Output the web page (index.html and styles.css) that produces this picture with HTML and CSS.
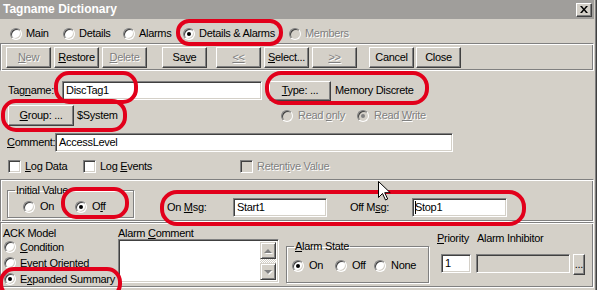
FILE: index.html
```html
<!DOCTYPE html>
<html lang="en">
<head>
  <meta charset="UTF-8" />
  <title>Tagname Dictionary</title>
  <link rel="stylesheet" href="styles.css">
</head>
<body>

<div class="window">
  <div class="titlebar">
    <span class="title">Tagname Dictionary</span>
    <span class="close-btn">
      <svg width="8" height="7" viewBox="0 0 8 7"><path d="M0 0h2l2 2.4 2-2.4h2l-3 3.5 3 3.5h-2l-2-2.4-2 2.4h-2l3-3.5z"/></svg>
    </span>
  </div>

  <div class="tabs">
    <div class="opt"><span class="radio"></span><span>Main</span></div>
    <div class="opt"><span class="radio"></span><span>Details</span></div>
    <div class="opt"><span class="radio"></span><span>Alarms</span></div>
    <div class="opt"><span class="radio checked"></span><span>Details &amp; Alarms</span></div>
    <div class="opt off"><span class="radio"></span><span>Members</span></div>
  </div>

  <div class="toolbar panel">
    <div class="btn-group">
      <div class="btn off"><span><u>N</u>ew</span></div>
      <div class="btn"><span><u>R</u>estore</span></div>
      <div class="btn off"><span><u>D</u>elete</span></div>
    </div>
    <div class="btn-group save-group">
      <div class="btn"><span>Sa<u>v</u>e</span></div>
    </div>
    <div class="btn-group nav-group">
      <div class="btn off"><span><u>&lt;&lt;</u></span></div>
      <div class="btn"><span><u>S</u>elect...</span></div>
      <div class="btn off"><span><u>&gt;&gt;</u></span></div>
    </div>
    <div class="btn-group close-group">
      <div class="btn"><span>Cancel</span></div>
      <div class="btn"><span>Close</span></div>
    </div>
  </div>

  <div class="tag-section">
    <div class="row tag-row">
      <span class="tag-lbl">Tag<u>n</u>ame:</span>
      <span class="field tag-field">DiscTag1</span>
      <span class="btn type-btn"><span><u>T</u>ype: ...</span></span>
      <span class="type-name">Memory Discrete</span>
    </div>
    <div class="row group-row">
      <span class="btn group-btn"><span><u>G</u>roup: ...</span></span>
      <span class="group-name">$System</span>
      <span class="opt off read-only"><span class="radio"></span><span>Read <u>o</u>nly</span></span>
      <span class="opt off"><span class="radio checked"></span><span>Read <u>W</u>rite</span></span>
    </div>
    <div class="row comment-row">
      <span class="comment-lbl"><u>C</u>omment:</span>
      <span class="field comment-field">AccessLevel</span>
    </div>
    <div class="row check-row">
      <span class="opt log-data"><span class="check"></span><span><u>L</u>og Data</span></span>
      <span class="opt log-events"><span class="check"></span><span>Log <u>E</u>vents</span></span>
      <span class="opt off"><span class="check"></span><span>Retent<u>i</u>ve Value</span></span>
    </div>
  </div>

  <div class="msg-section panel">
    <fieldset class="initial">
      <legend>Initial Value</legend>
      <div class="initial-opts">
        <span class="opt on-opt"><span class="radio"></span><span>On</span></span>
        <span class="opt"><span class="radio checked"></span><span>O<u>f</u>f</span></span>
      </div>
    </fieldset>
    <div class="msgs">
      <span class="on-lbl">On <u>M</u>sg:</span>
      <span class="field msg-field">Start1</span>
      <span class="off-lbl">Off M<u>s</u>g:</span>
      <span class="field msg-field off-field"><span class="caret"></span>Stop1</span>
    </div>
  </div>

  <div class="alarm-section panel">
    <div class="ack">
      <div class="ack-lbl">ACK Model</div>
      <div class="opt ack-opt"><span class="radio"></span><span><u>C</u>ondition</span></div>
      <div class="opt ack-opt"><span class="radio"></span><span>Event Oriented</span></div>
      <div class="opt ack-opt"><span class="radio checked"></span><span>E<u>x</u>panded Summary</span></div>
    </div>
    <div class="alarm-comment">
      <div class="ac-lbl">Alarm <u>C</u>omment</div>
      <div class="textarea">
        <div class="scroll">
          <span class="sb-btn"><span class="arrow up"></span></span>
          <span class="sb-track"></span>
          <span class="sb-btn"><span class="arrow down"></span></span>
        </div>
      </div>
    </div>
    <fieldset class="alarm-state">
      <legend><u>A</u>larm State</legend>
      <div class="state-opts">
        <span class="opt st-on"><span class="radio checked"></span><span>On</span></span>
        <span class="opt st-off"><span class="radio"></span><span>Off</span></span>
        <span class="opt"><span class="radio"></span><span>None</span></span>
      </div>
    </fieldset>
    <div class="priority">
      <div class="pr-labels">
        <span class="pr-lbl"><u>P</u>riority</span>
        <span>Alarm Inhibitor</span>
      </div>
      <div class="pr-inputs">
        <span class="field pr-field">1</span>
        <span class="field inhibitor-field"></span>
        <span class="btn dots-btn"><span>...</span></span>
      </div>
    </div>
  </div>

  <!-- red annotation marks -->
  <div class="mark mark-tabs"></div>
  <div class="mark mark-tag"></div>
  <div class="mark mark-type"></div>
  <div class="mark mark-group"></div>
  <div class="mark mark-off"></div>
  <div class="mark mark-msg"></div>
  <div class="mark mark-expanded"></div>

  <svg class="pointer" width="13" height="20" viewBox="0 0 13 20">
    <path d="M0.5 0.5v16l4-4 3 6.5 2.2-1-3-6.3h5.5z" fill="#fff" stroke="#000" stroke-width="1"/>
  </svg>
</div>

</body>
</html>
```

FILE: styles.css
```css
* {
  box-sizing: border-box;
}
body {
  margin: 0;
  background: #fff;
  font-family: "Liberation Sans", Arial, sans-serif;
  font-size: 11px;
  line-height: 13px;
  letter-spacing: -0.3px;
  color: #000;
}
.window {
  position: relative;
  width: 597px;
  height: 290px;
  background: #d4d0c8;
  overflow: hidden;
  padding-right: 3px;
  box-shadow: inset -1px 0 #404040, inset -2px 0 #808080;
}

/* Title bar */
.titlebar {
  height: 19px;
  background: #a09e9b;
  display: flex;
  align-items: center;
  padding: 0 2px 0 3px;
}
.title {
  color: #fff;
  font-weight: bold;
  font-size: 12px;
  letter-spacing: 0;
}
.close-btn {
  margin-left: auto;
  width: 16px;
  height: 14px;
  background: #d4d0c8;
  border: 1px solid;
  border-color: #fff #404040 #404040 #fff;
  box-shadow: inset -1px -1px #808080;
  display: flex;
  align-items: center;
  justify-content: center;
}

/* Radios, checks */
.opt {
  display: flex;
  align-items: center;
  gap: 5px;
  white-space: nowrap;
}
.radio, .check {
  flex: none;
  position: relative;
  width: 12px;
  height: 12px;
  background: #fff;
  border: 1px solid;
  border-color: #808080 #fff #fff #808080;
  box-shadow: inset 1px 1px #404040, inset -1px -1px #d4d0c8;
}
.radio {
  border-radius: 50%;
}
.check {
  width: 13px;
  height: 13px;
  margin-right: -1px;
}
.radio.checked::after {
  content: "";
  position: absolute;
  left: 3px; top: 3px;
  width: 4px; height: 4px;
  border-radius: 50%;
  background: #000;
}
.off {
  color: #808080;
  text-shadow: 1px 1px 0 #fff;
}
.off .radio, .off .check {
  background: #d4d0c8;
}
.off .radio.checked::after {
  background: #808080;
}

/* Frames */
.panel {
  border: 1px solid;
  border-color: #808080 #fff #fff #808080;
  box-shadow: inset 1px 1px #fff, inset -1px -1px #808080;
}
fieldset {
  margin: 0;
  padding: 0;
  border: 1px solid #808080;
  box-shadow: 1px 1px 0 #fff, inset 1px 1px 0 #fff;
}
legend {
  padding: 0 1px;
  margin-left: 7px;
  line-height: 12px;
}

/* Buttons */
.btn {
  flex: none;
  width: 45px;
  height: 21px;
  display: flex;
  align-items: center;
  justify-content: center;
  background: #d4d0c8;
  border: 1px solid;
  border-color: #fff #404040 #404040 #fff;
  box-shadow: inset -1px -1px #808080;
  white-space: nowrap;
}

.tabs {
  display: grid;
  grid-template-columns: 53px 60px 60px 106px auto;
  align-items: center;
  height: 24px;
  padding: 5px 0 0 10px;
}
.tabs .opt {
  gap: 4px;
}

.toolbar {
  display: flex;
  height: 28px;
  padding: 3px 0 0 5px;
}
.btn-group {
  display: flex;
  gap: 3px;
}
.save-group { margin-left: 15px; }
.nav-group { margin-left: 9px; }
.close-group { margin-left: 12px; gap: 2px; }

/* Tag rows */
.row {
  display: flex;
  align-items: center;
}
.field {
  flex: none;
  height: 19px;
  display: flex;
  align-items: center;
  padding: 0 3px;
  background: #fff;
  border: 1px solid;
  border-color: #808080 #fff #fff #808080;
  box-shadow: inset 1px 1px #404040, inset -1px -1px #d4d0c8;
  white-space: nowrap;
}
.tag-row {
  margin-top: 10px;
  height: 19px;
  padding-left: 8px;
}
.tag-lbl { width: 54px; }
.tag-field { width: 200px; }
.type-btn {
  width: 62px;
  height: 20px;
  margin-left: 7px;
}
.type-name { margin-left: 4px; }

.group-row {
  margin-top: 5px;
  height: 21px;
  padding-left: 8px;
}
.group-btn { width: 66px; }
.group-name {
  width: 207px;
  padding-left: 3px;
}
.read-only { width: 76px; }

.comment-row {
  margin-top: 7px;
  padding-left: 7px;
}
.comment-lbl { width: 48px; }
.comment-field { width: 398px; }

.check-row {
  margin-top: 8px;
  height: 13px;
  padding-left: 8px;
}
.log-data { width: 75px; }
.log-events { width: 157px; }

/* Messages */
.msg-section {
  display: flex;
  align-items: flex-start;
  margin-top: 6px;
  height: 43px;
  padding: 4px 0 0 6px;
}
.initial {
  width: 127px;
  height: 34px;
}
.initial-opts {
  display: flex;
  padding: 4px 0 0 15px;
}
.on-opt { width: 52px; }
.msgs {
  display: flex;
  align-items: center;
  margin: 14px 0 0 33px;
}
.on-lbl { width: 66px; }
.msg-field { width: 94px; }
.off-lbl {
  width: 62px;
  margin-left: 23px;
}
.off-field {
  width: 95px;
  padding-left: 2px;
}
.caret {
  width: 1px;
  height: 13px;
  background: #000;
  margin-right: -1px;
}

/* Alarms */
.alarm-section {
  display: flex;
  align-items: flex-start;
  height: 66px;
}
.ack {
  width: 117px;
  padding: 4px 0 0 2px;
}
.ack-lbl {
  line-height: 12px;
}
.ack-opt {
  height: 16px;
  padding-left: 1px;
  gap: 4px;
}
.alarm-comment {
  margin-top: 4px;
}
.ac-lbl {
  line-height: 12px;
}
.textarea {
  width: 161px;
  height: 44px;
  background: #fff;
  border: 1px solid;
  border-color: #808080 #fff #fff #808080;
  box-shadow: inset 1px 1px #404040, inset -1px -1px #d4d0c8;
  padding: 2px 2px 2px 0;
  display: flex;
  justify-content: flex-end;
}
.scroll {
  width: 16px;
  display: flex;
  flex-direction: column;
}
.sb-btn {
  height: 17px;
  background: #d4d0c8;
  border: 1px solid;
  border-color: #d4d0c8 #404040 #404040 #d4d0c8;
  box-shadow: inset 1px 1px #fff, inset -1px -1px #808080;
  display: flex;
  align-items: center;
  justify-content: center;
}
.sb-track {
  flex: 1;
  background: repeating-conic-gradient(#fff 0 25%, #d4d0c8 0 50%) 0 0 / 2px 2px;
}
.arrow {
  width: 0;
  height: 0;
  border-left: 4px solid transparent;
  border-right: 4px solid transparent;
  filter: drop-shadow(1px 1px 0 #fff);
}
.arrow.up { border-bottom: 4px solid #808080; }
.arrow.down { border-top: 4px solid #808080; }

.alarm-state {
  width: 143px;
  height: 43px;
  margin: 17px 0 0 7px;
}
.state-opts {
  display: flex;
  padding: 7px 0 0 5px;
}
.st-on { width: 43px; }
.st-off { width: 39px; }

.priority {
  margin: 9px 0 0 8px;
}
.pr-labels {
  display: flex;
  line-height: 12px;
}
.pr-lbl { width: 40px; }
.pr-inputs {
  display: flex;
  margin-top: 10px;
  padding-left: 4px;
}
.pr-field { width: 30px; }
.inhibitor-field {
  width: 94px;
  margin-left: 5px;
  background: #d4d0c8;
}
.dots-btn {
  width: 12px;
  margin-left: 3px;
  align-items: flex-end;
  padding-bottom: 3px;
}

/* Red annotation marks */
.mark {
  position: absolute;
  border: 4px solid #e2001b;
  border-radius: 15px;
}
.mark-tabs { left: 176px; top: 19px; width: 107px; height: 27px; border-radius: 13px; }
.mark-tag { left: 54px; top: 71px; width: 84px; height: 33px; }
.mark-type { left: 265px; top: 71px; width: 164px; height: 34px; border-radius: 16px; }
.mark-group { left: 1px; top: 99px; width: 126px; height: 33px; }
.mark-off { left: 61px; top: 187px; width: 68px; height: 32px; }
.mark-msg { left: 160px; top: 190px; width: 366px; height: 36px; border-radius: 17px; }
.mark-expanded { left: -1px; top: 267px; width: 123px; height: 32px; }

.pointer {
  position: absolute;
  left: 378px;
  top: 181px;
}
```
